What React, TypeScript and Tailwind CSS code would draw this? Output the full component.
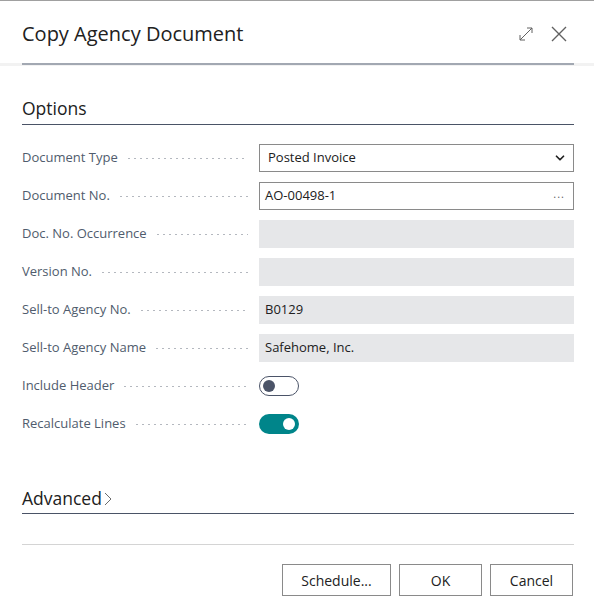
import { ChevronDown } from "lucide-react"

const font = { fontFamily: '"Segoe UI", "Open Sans", "Noto Sans", sans-serif' }

function Dots() {
  return (
    <div className="flex-1 ml-2 h-[3px] bg-[radial-gradient(circle,#b4b8bf_0.7px,transparent_1px)] bg-[length:6px_3px] bg-repeat-x" />
  )
}

function Row({ label, children }: { label: string; children: React.ReactNode }) {
  return (
    <div className="flex items-center h-[38px]">
      <div className="flex items-center w-[237px] pr-[11px]">
        <span className="text-[13px] text-[#505c6d] whitespace-nowrap">{label}</span>
        <Dots />
      </div>
      <div className="flex-1">{children}</div>
    </div>
  )
}

function ReadOnly({ value }: { value?: string }) {
  return (
    <div className="h-[28px] bg-[#e6e7e9] px-[6px] flex items-center text-[13px] text-[#212121]">
      {value}
    </div>
  )
}

function Toggle({ on }: { on: boolean }) {
  return on ? (
    <div className="w-[40px] h-[20px] rounded-full bg-[#00858a] flex items-center justify-end px-[4px]">
      <div className="w-[12px] h-[12px] rounded-full bg-white" />
    </div>
  ) : (
    <div className="w-[40px] h-[20px] rounded-full border border-[#4b5468] flex items-center px-[3px]">
      <div className="w-[12px] h-[12px] rounded-full bg-[#4b5468]" />
    </div>
  )
}

export default function App() {
  return (
    <div className="w-[594px] h-[616px] bg-white border-t border-[#a0a0a0] relative" style={font}>
      {/* Header */}
      <div className="h-[62px] flex items-center justify-between pl-[22px] pr-[26px] pt-[3px]">
        <h1 className="text-[20px] text-[#212121]">Copy Agency Document</h1>
        <div className="flex items-center gap-[16px] text-[#616161]">
          <svg width="16" height="16" viewBox="0 0 16 16" fill="none" stroke="currentColor" strokeWidth="1">
            <path d="M2 14 L14 2 M9 2 H14 V7 M2 9 V14 H7" />
          </svg>
          <svg width="18" height="18" viewBox="0 0 18 18" fill="none" stroke="currentColor" strokeWidth="1.4">
            <path d="M2 2 L16 16 M16 2 L2 16" />
          </svg>
        </div>
      </div>
      <div className="h-[3px] bg-[#f2f2f2] pl-[22px] pr-[20px]">
        <div className="h-[2px] bg-[#a2a8b2]" />
      </div>

      <div className="pl-[22px] pr-[20px]">
        {/* Options */}
        <div className="mt-[30px] border-b border-[#4a5366] pb-[4px]">
          <h2 className="text-[17.5px] text-[#212121] leading-[24px]">Options</h2>
        </div>
        <div className="mt-[14px]">
          <Row label="Document Type">
            <div className="h-[28px] border border-[#8a8a8a] flex items-center justify-between px-[8px] text-[13px] text-[#212121]">
              <span>Posted Invoice</span>
              <ChevronDown size={14} strokeWidth={3} className="text-[#212121] -mr-[2px]" />
            </div>
          </Row>
          <Row label="Document No.">
            <div className="h-[28px] border border-[#8a8a8a] flex items-center justify-between pl-[5px] pr-[8px] text-[13px] text-[#212121]">
              <span>AO-00498-1</span>
              <span className="text-[#616161] tracking-[1px] text-[11px] -mt-[4px]">...</span>
            </div>
          </Row>
          <Row label="Doc. No. Occurrence">
            <ReadOnly />
          </Row>
          <Row label="Version No.">
            <ReadOnly />
          </Row>
          <Row label="Sell-to Agency No.">
            <ReadOnly value="B0129" />
          </Row>
          <Row label="Sell-to Agency Name">
            <ReadOnly value="Safehome, Inc." />
          </Row>
          <Row label="Include Header">
            <Toggle on={false} />
          </Row>
          <Row label="Recalculate Lines">
            <Toggle on={true} />
          </Row>
        </div>

        {/* Advanced */}
        <div className="mt-[43px] border-b border-[#4a5366] pb-[3px] flex items-center">
          <h2 className="text-[17.5px] text-[#212121] leading-[24px]">Advanced</h2>
          <svg width="8" height="14" viewBox="0 0 8 14" fill="none" stroke="#6b6b6b" strokeWidth="1" className="ml-[2px] mt-[2px]">
            <path d="M1 1 L7 7 L1 13" />
          </svg>
        </div>

        <div className="mt-[30px] border-t border-[#d4d4d4]" />

        {/* Footer buttons */}
        <div className="mt-[19px] flex justify-end gap-[8px] pr-[1px]">
          <button className="w-[109px] h-[32px] border border-[#8a8a8a] text-[14px] text-[#212121] bg-white">Schedule...</button>
          <button className="w-[83px] h-[32px] border border-[#8a8a8a] text-[14px] text-[#212121] bg-white">OK</button>
          <button className="w-[83px] h-[32px] border border-[#8a8a8a] text-[14px] text-[#212121] bg-white">Cancel</button>
        </div>
      </div>
    </div>
  )
}
